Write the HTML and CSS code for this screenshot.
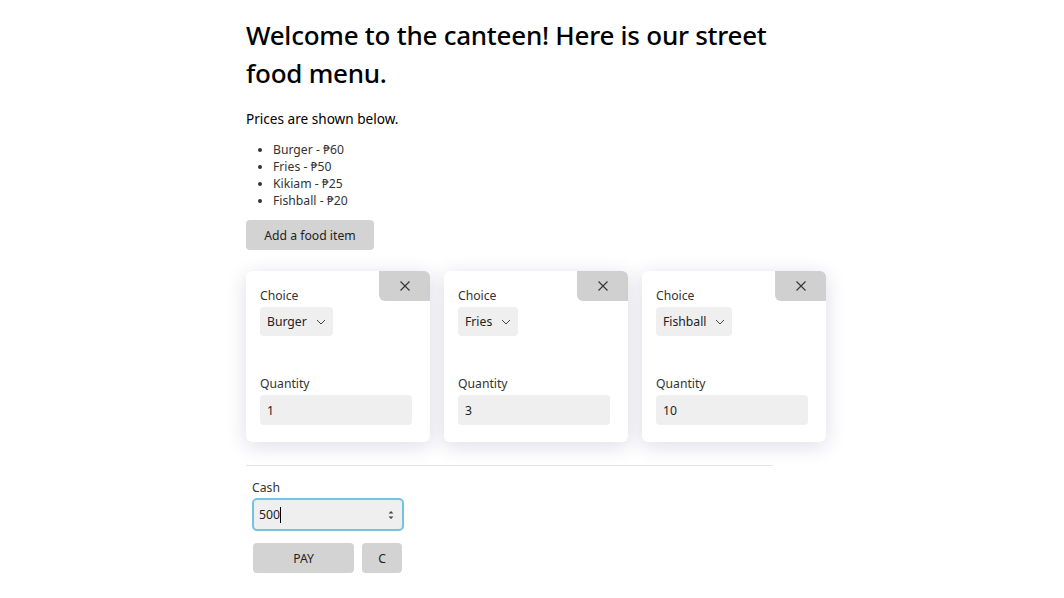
FILE: index.html
```html
<!DOCTYPE html>
<html>
<head>
<meta charset="utf-8">
<link rel="stylesheet" href="styles.css">
</head>
<body>
<main class="page">
  <h1 class="title">Welcome to the canteen! Here is our street food menu.</h1>
  <p class="lead">Prices are shown below.</p>
  <ul class="prices">
    <li>Burger - ₱60</li>
    <li>Fries - ₱50</li>
    <li>Kikiam - ₱25</li>
    <li>Fishball - ₱20</li>
  </ul>
  <button class="btn add-btn">Add a food item</button>

  <div class="cards">
    <div class="card">
      <button class="close"><svg width="12" height="12" viewBox="0 0 12 12"><path d="M1.5 1.5L10.5 10.5M10.5 1.5L1.5 10.5" stroke="#333" stroke-width="1.1" fill="none"/></svg></button>
      <label class="label">Choice</label>
      <div class="select"><span>Burger</span><svg width="10" height="6" viewBox="0 0 10 6"><path d="M1 1l4 4 4-4" stroke="#444" stroke-width="1" fill="none"/></svg></div>
      <label class="label qty-label">Quantity</label>
      <div class="field">1</div>
    </div>
    <div class="card">
      <button class="close"><svg width="12" height="12" viewBox="0 0 12 12"><path d="M1.5 1.5L10.5 10.5M10.5 1.5L1.5 10.5" stroke="#333" stroke-width="1.1" fill="none"/></svg></button>
      <label class="label">Choice</label>
      <div class="select"><span>Fries</span><svg width="10" height="6" viewBox="0 0 10 6"><path d="M1 1l4 4 4-4" stroke="#444" stroke-width="1" fill="none"/></svg></div>
      <label class="label qty-label">Quantity</label>
      <div class="field">3</div>
    </div>
    <div class="card">
      <button class="close"><svg width="12" height="12" viewBox="0 0 12 12"><path d="M1.5 1.5L10.5 10.5M10.5 1.5L1.5 10.5" stroke="#333" stroke-width="1.1" fill="none"/></svg></button>
      <label class="label">Choice</label>
      <div class="select"><span>Fishball</span><svg width="10" height="6" viewBox="0 0 10 6"><path d="M1 1l4 4 4-4" stroke="#444" stroke-width="1" fill="none"/></svg></div>
      <label class="label qty-label">Quantity</label>
      <div class="field">10</div>
    </div>
  </div>

  <hr class="divider">

  <section class="pay">
    <label class="label">Cash</label>
    <div class="cash"><span class="cash-val">500</span><span class="caret"></span>
      <svg class="spin" width="6" height="10" viewBox="0 0 6 10"><path d="M0.5 3.5L3 1l2.5 2.5z M0.5 6.5L3 9l2.5-2.5z" fill="#444"/></svg>
    </div>
    <div class="actions">
      <button class="btn pay-btn">PAY</button>
      <button class="btn c-btn">C</button>
    </div>
  </section>
</main>
</body>
</html>
```

FILE: styles.css
```css
* { box-sizing: border-box; }
html, body { margin: 0; padding: 0; background: #fff; }
body {
  font-family: "Noto Sans", "Open Sans", sans-serif;
  color: #000;
}
.page {
  width: 572px;
  margin: 0 auto;
  padding-top: 16px;
}
.title {
  font-size: 26px;
  font-weight: 500;
  line-height: 38px;
  margin: 0;
  width: 555px;
  letter-spacing: -0.25px;
}
.lead {
  font-size: 13.6px;
  margin: 17px 0 0;
  line-height: 20px;
}
.prices {
  margin: 12px 0 0;
  padding-left: 27px;
  font-size: 12.2px;
  line-height: 17px;
  color: #333;
}
.btn {
  font-family: inherit;
  border: none;
  background: #d3d3d3;
  border-radius: 4px;
  font-size: 12.2px;
  color: #222;
  cursor: pointer;
}
.add-btn {
  margin-top: 11px;
  width: 128px;
  height: 30px;
  display: block;
}
.cards {
  display: flex;
  gap: 14px;
  margin-top: 21px;
  width: 590px;
}
.card {
  position: relative;
  width: 184px;
  height: 171px;
  flex: none;
  background: #fff;
  border-radius: 6px;
  box-shadow: 0 4px 20px rgba(40, 40, 100, 0.16);
  padding: 16px 18px 0 14px;
  display: flex;
  flex-direction: column;
}
.close {
  position: absolute;
  top: 0;
  right: 0;
  width: 51px;
  height: 30px;
  border: none;
  background: #d0d0d0;
  border-radius: 0 6px 0 6px;
  display: flex;
  align-items: center;
  justify-content: center;
  padding: 0;
}
.label {
  font-size: 12.2px;
  color: #333;
  line-height: 17px;
  display: block;
}
.select {
  margin-top: 3px;
  align-self: flex-start;
  height: 29px;
  background: #efefef;
  border-radius: 4px;
  display: flex;
  align-items: center;
  gap: 9px;
  padding: 0 7px 0 7px;
  font-size: 12.2px;
  color: #222;
}
.select svg { margin-top: 1px; }
.qty-label { margin-top: 39px; }
.field {
  margin-top: 3px;
  height: 30px;
  background: #efefef;
  border-radius: 4px;
  font-size: 12.2px;
  color: #222;
  padding: 0 7px;
  display: flex;
  align-items: center;
}
.divider {
  border: none;
  border-top: 1px solid #e3e3e3;
  width: 527px;
  margin: 23px 0 0;
}
.pay {
  padding: 13px 0 0 6px;
}
.cash {
  margin-top: 2px;
  width: 152px;
  height: 33px;
  border: 2px solid #72c4e0;
  border-radius: 5px;
  background: #efefef;
  display: flex;
  align-items: center;
  padding: 0 0 0 5px;
  font-size: 12.2px;
  color: #222;
  position: relative;
}
.caret {
  display: inline-block;
  width: 1px;
  height: 16px;
  background: #000;
}
.spin {
  margin-left: auto;
  margin-right: 8px;
}
.actions {
  display: flex;
  gap: 8px;
  margin-top: 12px;
  padding-left: 1px;
}
.pay-btn { width: 101px; height: 30px; }
.c-btn { width: 40px; height: 30px; }
```
